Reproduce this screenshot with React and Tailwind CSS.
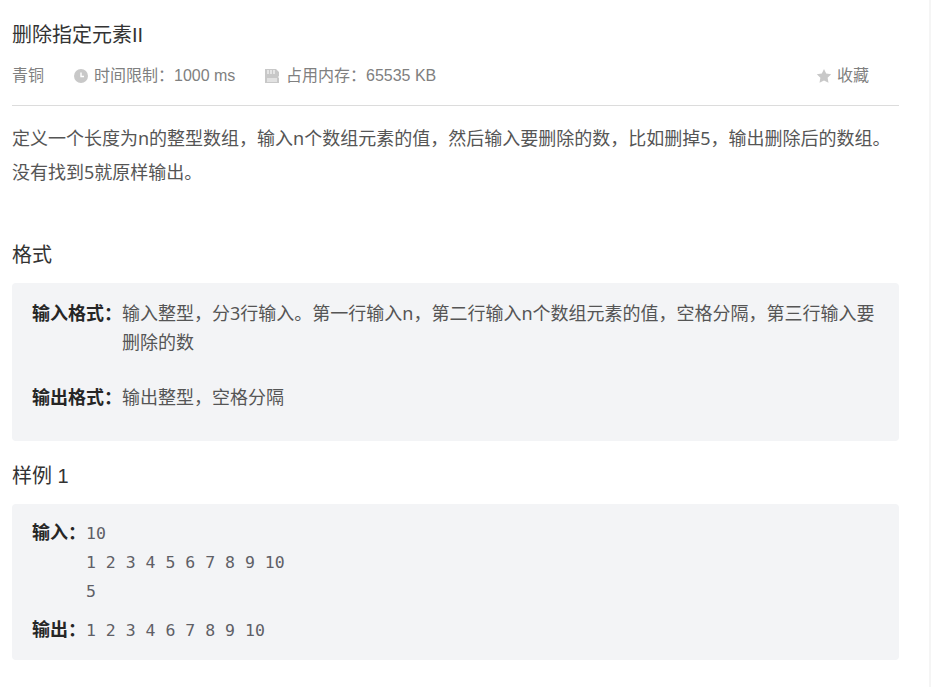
// full-width punctuation, as in the original page
const C = '\uFF0C'
const K = '\uFF1A'
const P = '\u3002'

function Star() {
  return (
    <svg width="16" height="16" viewBox="0 0 16 16" className="mr-[5px]">
      <path d="M8 1l2.2 4.600 5 .7-3.600 3.500.9 5L8 12.400l-4.500 2.400.9-5L.8 6.300l5-.7z" fill="#c8c8c8" />
    </svg>
  )
}

function Clock() {
  return (
    <svg width="14" height="14" viewBox="0 0 14 14" className="mr-[6px]">
      <circle cx="7" cy="7" r="7" fill="#c8c8c8" />
      <path d="M7 3.500V7.500H10" stroke="#fff" strokeWidth="1.400" fill="none" />
    </svg>
  )
}

function Card() {
  return (
    <svg width="14" height="14" viewBox="0 0 14 14" className="mr-[7px]">
      <path d="M0 0H11L14 3V7L13 8L14 9V14H0Z" fill="#c8c8c8" />
      <path d="M3 1V5M6 1V5M9 1V5" stroke="#eee" strokeWidth="1.500" fill="none" />
      <rect x="2" y="9" width="10" height="4" fill="#e2e2e2" />
    </svg>
  )
}

export default function App() {
  return (
    <div className="flex min-h-[687px] bg-white font-['Liberation_Sans','Noto_Sans_CJK_SC',sans-serif]">
      <main className="w-[887px] ml-3 pt-[22px]">
        <h1 className="text-xl leading-[26px] text-[#333]">删除指定元素II</h1>

        <div className="flex items-center mt-4 h-[24px] text-base text-[#808080]">
          <span className="w-[62px]">青铜</span>
          <Clock />
          <span className="w-[171px]">{`时间限制${K}1000 ms`}</span>
          <Card />
          <span>{`占用内存${K}65535 KB`}</span>
          <span className="ml-auto mr-[30px] flex items-center">
            <Star />
            收藏
          </span>
        </div>

        <div className="mt-[17px] border-t border-[#dcdcdc]" />

        <p className="mt-[15px] text-lg leading-[34px] text-[#555] font-['Noto_Sans','Noto_Sans_CJK_SC',sans-serif]">
          {`定义一个长度为n的整型数组${C}输入n个数组元素的值${C}然后输入要删除的数${C}比如删掉5${C}输出删除后的数组${P}没有找到5就原样输出${P}`}
        </p>

        <h2 className="mt-[51px] text-xl leading-[30px] text-[#333]">格式</h2>

        <section className="mt-[13px] h-[158px] rounded bg-[#f3f4f6] px-5 pt-[17px]">
          <div className="flex text-lg leading-[29px]">
            <b className="w-[90px] shrink-0 text-[#262626]">{`输入格式${K}`}</b>
            <span className="-mt-px text-[#555] font-['Noto_Sans','Noto_Sans_CJK_SC',sans-serif]">
              {`输入整型${C}分3行输入${P}第一行输入n${C}第二行输入n个数组元素的值${C}空格分隔${C}第三行输入要删除的数`}
            </span>
          </div>
          <div className="flex mt-[27px] text-lg leading-[29px]">
            <b className="w-[90px] shrink-0 text-[#262626]">{`输出格式${K}`}</b>
            <span className="text-[#555]">{`输出整型${C}空格分隔`}</span>
          </div>
        </section>

        <h2 className="mt-5 text-xl leading-[30px] text-[#333]">样例 1</h2>

        <section className="mt-[13px] h-[156px] rounded bg-[#f3f4f6] px-5 pt-[15px]">
          <div className="flex text-lg leading-[29px]">
            <b className="w-[54px] shrink-0 text-[#262626]">{`输入${K}`}</b>
            <pre className="text-[16.500px] leading-[29px] text-[#5f5f66] font-['DejaVu_Sans_Mono',monospace]">
              {'10\n1 2 3 4 5 6 7 8 9 10\n5'}
            </pre>
          </div>
          <div className="flex mt-[10px] text-lg leading-[29px]">
            <b className="w-[54px] shrink-0 text-[#262626]">{`输出${K}`}</b>
            <pre className="text-[16.500px] leading-[29px] text-[#5f5f66] font-['DejaVu_Sans_Mono',monospace]">
              1 2 3 4 6 7 8 9 10
            </pre>
          </div>
        </section>
      </main>
      <div className="ml-auto w-[2px] bg-[#f5f5f5]" />
    </div>
  )
}
